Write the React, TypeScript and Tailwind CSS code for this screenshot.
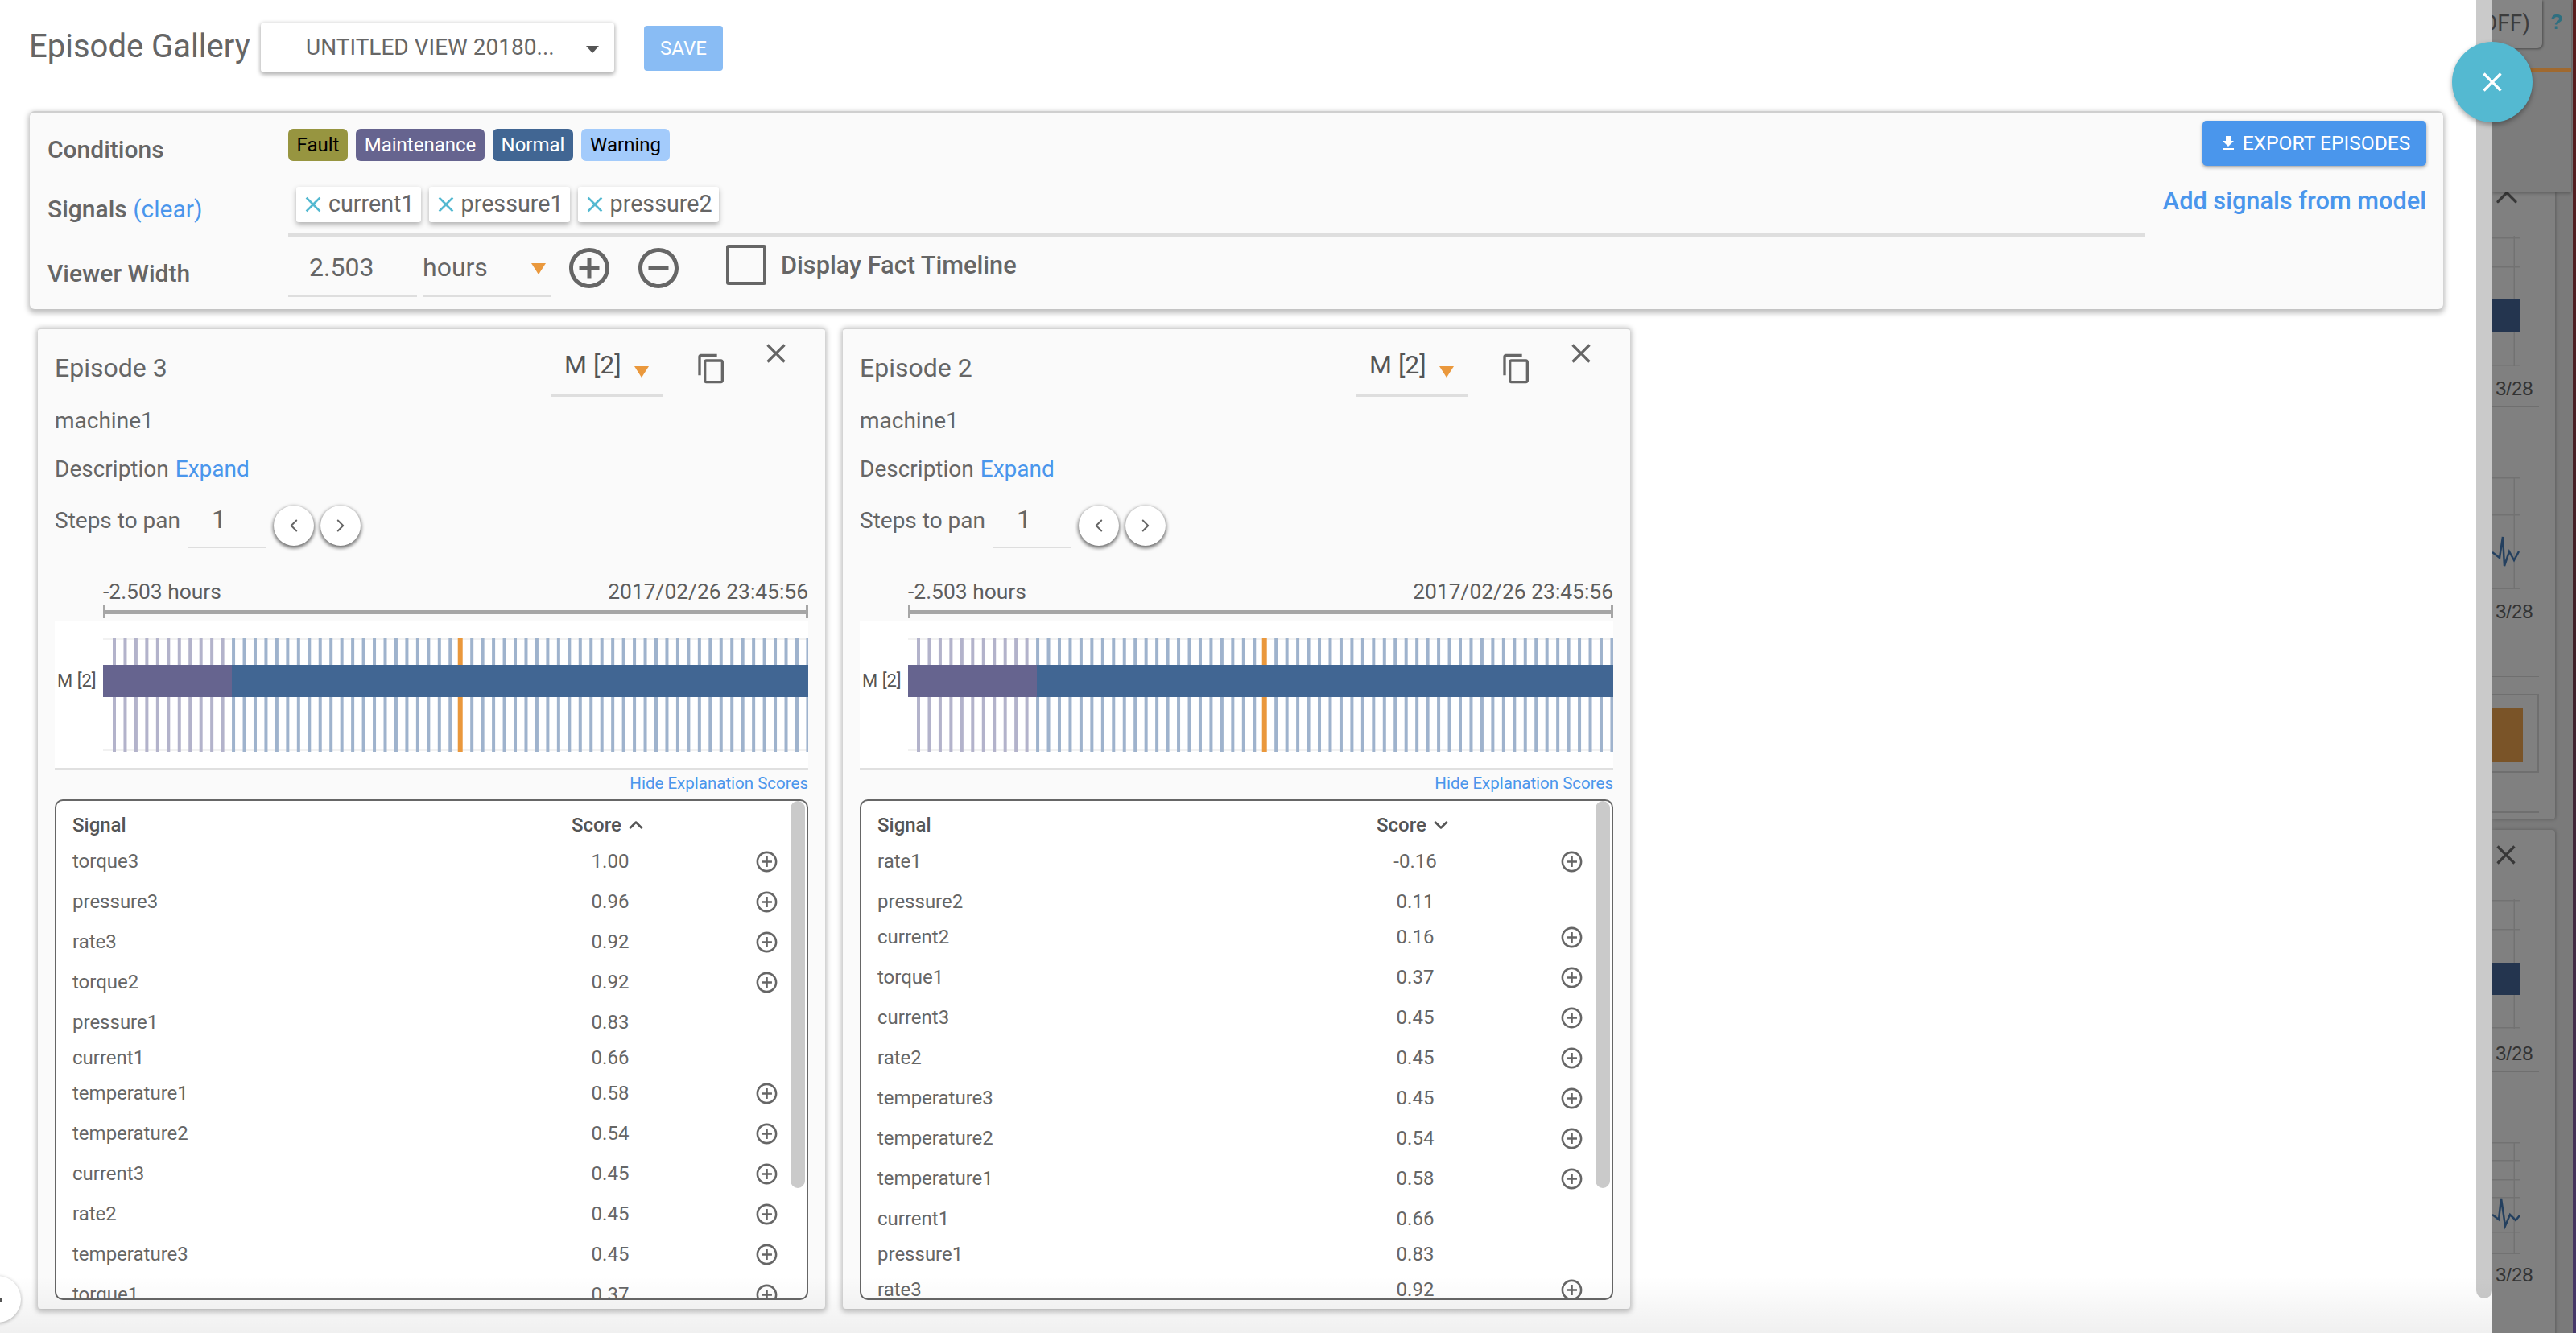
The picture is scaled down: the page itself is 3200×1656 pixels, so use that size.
import { ChevronDown, ChevronLeft, ChevronRight, ChevronUp } from 'lucide-react';

const ROBOTO = "font-['Roboto',sans-serif]";

const ICONS = {
  plus: 'M13 7h-2v4H7v2h4v4h2v-4h4v-2h-4V7zm-1-5C6.48 2 2 6.48 2 12s4.48 10 10 10 10-4.48 10-10S17.52 2 12 2zm0 18c-4.41 0-8-3.59-8-8s3.59-8 8-8 8 3.59 8 8-3.59 8-8 8z',
  minus: 'M7 11v2h10v-2H7zm5-9C6.48 2 2 6.48 2 12s4.48 10 10 10 10-4.48 10-10S17.52 2 12 2zm0 18c-4.41 0-8-3.59-8-8s3.59-8 8-8 8 3.59 8 8-3.59 8-8 8z',
  copy: 'M16 1H4c-1.1 0-2 .9-2 2v14h2V3h12V1zm3 4H8c-1.1 0-2 .9-2 2v14c0 1.1.9 2 2 2h11c1.1 0 2-.9 2-2V7c0-1.1-.9-2-2-2zm0 16H8V7h11v14z',
  download: 'M19 9h-4V3H9v6H5l7 7 7-7zM5 18v2h14v-2H5z',
  close: 'M19 6.41L17.59 5 12 10.59 6.41 5 5 6.41 10.59 12 5 17.59 6.41 19 12 13.41 17.59 19 19 17.59 13.41 12z',
};

function Icon({ d, className }: { d: string; className: string }) {
  return (
    <svg viewBox="0 0 24 24" fill="currentColor" className={`shrink-0 ${className}`}>
      <path d={d} />
    </svg>
  );
}

function Caret({ className }: { className: string }) {
  return <span className={`w-0 h-0 border-x-[9px] border-x-transparent border-t-[14px] ${className}`} />;
}

interface Row {
  name: string;
  score: string;
  plus: boolean;
}

const rowsA: Row[] = [
  { name: 'torque3', score: '1.00', plus: true },
  { name: 'pressure3', score: '0.96', plus: true },
  { name: 'rate3', score: '0.92', plus: true },
  { name: 'torque2', score: '0.92', plus: true },
  { name: 'pressure1', score: '0.83', plus: false },
  { name: 'current1', score: '0.66', plus: false },
  { name: 'temperature1', score: '0.58', plus: true },
  { name: 'temperature2', score: '0.54', plus: true },
  { name: 'current3', score: '0.45', plus: true },
  { name: 'rate2', score: '0.45', plus: true },
  { name: 'temperature3', score: '0.45', plus: true },
  { name: 'torque1', score: '0.37', plus: true },
];

const rowsB: Row[] = [
  { name: 'rate1', score: '-0.16', plus: true },
  { name: 'pressure2', score: '0.11', plus: false },
  { name: 'current2', score: '0.16', plus: true },
  { name: 'torque1', score: '0.37', plus: true },
  { name: 'current3', score: '0.45', plus: true },
  { name: 'rate2', score: '0.45', plus: true },
  { name: 'temperature3', score: '0.45', plus: true },
  { name: 'temperature2', score: '0.54', plus: true },
  { name: 'temperature1', score: '0.58', plus: true },
  { name: 'current1', score: '0.66', plus: false },
  { name: 'pressure1', score: '0.83', plus: false },
  { name: 'rate3', score: '0.92', plus: true },
];

// plot area of the timeline, x is relative to the start of the band
function Timeline({ start }: { start: number }) {
  const ticks = Array.from({ length: 65 }, (_, i) => start + i * 13.46);
  return (
    <svg width="876" height="182" className="block shrink-0">
      <rect x="0" y="20" width="876" height="3" fill="#f1f1f1" />
      <rect x="0" y="158" width="876" height="3" fill="#f1f1f1" />
      {ticks.map((x, i) => (
        <rect
          key={i}
          x={i === 32 ? x - 2 : x}
          y="20"
          width={i === 32 ? 6 : 4}
          height="142"
          fill={i === 32 ? '#ea983c' : i < 11 ? '#b3b3cb' : '#9fb3cd'}
        />
      ))}
      <rect x="0" y="54" width="160" height="40" fill="#66648f" />
      <rect x="160" y="54" width="716" height="40" fill="#416693" />
    </svg>
  );
}

function EpisodeCard({ title, rows, sortUp, tickStart }: { title: string; rows: Row[]; sortUp: boolean; tickStart: number }) {
  return (
    <div className="w-[978px] h-[1219px] bg-[#fafafa] rounded-[4px] border-t-2 border-[#d4d4d4] shadow-[0_2px_6px_2px_rgba(0,0,0,0.25)] px-[21px] text-[#666]">
      {/* title row */}
      <div className="flex items-start h-[88px]">
        <div className="mt-[28px] text-[32px] leading-[40px]">{title}</div>
        <div className="ml-auto mt-[18px] w-[140px] h-[66px] border-b-4 border-[#dedede] flex items-start pl-[17px] pt-[6px] text-[#555]">
          <span className="text-[32px] leading-[40px]">M [2]</span>
          <Caret className="ml-[16px] mt-[22px] border-t-[#ea983c]" />
        </div>
        <Icon d={ICONS.copy} className="w-[40px] h-[40px] ml-[40px] mt-[29px]" />
        <Icon d={ICONS.close} className="w-[40px] h-[40px] ml-[40px] mr-[20px] mt-[10px]" />
      </div>
      <div className="h-[50px] pt-[2px] flex items-center text-[28px]">machine1</div>
      <div className="mt-[16px] h-[40px] flex items-center text-[28px]">
        Description<span className="ml-[8px] text-[#4a96ec]">Expand</span>
      </div>
      {/* pan controls */}
      <div className="mt-[17px] h-[64px] flex items-start">
        <span className="text-[28px] leading-[40px] mt-[7px]">Steps to pan</span>
        <div className="ml-[10px] w-[97px] h-[61px] border-b-2 border-[#dedede] pl-[29px] text-[32px] leading-[40px] pt-[5px]">1</div>
        <button className="ml-[9px] mt-[8px] w-[50px] h-[50px] rounded-full bg-white flex items-center justify-center shadow-[0_2px_4px_1px_rgba(0,0,0,0.55)]">
          <ChevronLeft size={26} strokeWidth={1.8} />
        </button>
        <button className="ml-[8px] mt-[8px] w-[50px] h-[50px] rounded-full bg-white flex items-center justify-center shadow-[0_2px_4px_1px_rgba(0,0,0,0.55)]">
          <ChevronRight size={26} strokeWidth={1.8} />
        </button>
      </div>
      <div className="mt-[36px] ml-[60px] h-[32px] flex justify-between items-center text-[26.4px] text-[#5e5e5e]">
        <span>-2.503 hours</span>
        <span>2017/02/26 23:45:56</span>
      </div>
      <div className="ml-[60px] h-[16px] border-x-[3px] border-[#a6a6a6] flex items-center">
        <div className="w-full h-[5px] bg-[#a6a6a6]" />
      </div>
      {/* timeline */}
      <div className="mt-[4px] h-[184px] bg-white border-b-2 border-[#e0e0e0] flex">
        <div className="w-[60px] pl-[3px] h-[146px] flex items-center text-[22px] text-[#555]">M [2]</div>
        <Timeline start={tickStart} />
      </div>
      <div className="h-[34px] flex items-center justify-end text-[20.5px] text-[#4a96ec]">Hide Explanation Scores</div>
      {/* score table */}
      <div className="relative mt-[3px] h-[622px] bg-white border-2 border-[#666] rounded-[10px] overflow-hidden text-[24px]">
        <div className="absolute right-[2px] top-0 w-[18px] h-[481px] bg-[#cacaca] rounded-[9px]" />
        <div className="h-[49px] pt-[10px] flex items-center font-medium text-[#555]">
          <span className="pl-[20px] w-[640px]">Signal</span>
          <span>Score</span>
          {sortUp ? (
            <ChevronUp size={28} strokeWidth={2.2} className="ml-[4px]" />
          ) : (
            <ChevronDown size={28} strokeWidth={2.2} className="ml-[4px]" />
          )}
        </div>
        {rows.map((r) => (
          <div key={r.name} className={r.plus ? 'h-[50px] flex items-start leading-[52px]' : 'h-[44px] flex items-start leading-[52px]'}>
            <span className="pl-[20px] w-[640px]">{r.name}</span>
            <span className="w-[96px] text-center">{r.score}</span>
            {r.plus && <Icon d={ICONS.plus} className="ml-[131px] mt-[11px] w-[31px] h-[31px]" />}
          </div>
        ))}
      </div>
    </div>
  );
}

function SideChart({ lines, h, bar, spark }: { lines: number[]; h: number; bar?: number; spark?: string }) {
  return (
    <svg width="34" height={h} className="block">
      {lines.map((y) => (
        <rect key={y} x="0" y={y} width="34" height="1.5" fill="#727272" />
      ))}
      <rect x="26.5" y="0" width="1.5" height={h} fill="#727272" />
      {bar !== undefined && <rect x="0" y={bar} width="34" height="40" fill="#24354f" />}
      {spark && <polyline points={spark} fill="none" stroke="#24405f" strokeWidth="2.5" />}
    </svg>
  );
}

// what is left visible of the dimmed page behind the drawer
function DimmedPage() {
  return (
    <div className="w-[100px] h-full bg-[#7a7a7a] font-['Liberation_Sans',sans-serif] text-[24px] text-[#333] overflow-hidden">
      <div className="h-[238px] w-[98px] bg-[#7c7c7c] shadow-[0_2px_4px_rgba(0,0,0,0.3)] relative z-10">
        <div className="flex items-start">
          <div className="w-[62px] h-[60px] bg-[#858585] rounded-br-[6px] shadow-[1px_1px_3px_rgba(0,0,0,0.4)] flex items-center pb-[2px] overflow-hidden">
            <span className="text-[28px] -ml-[13px] text-[#3c3c3c] whitespace-nowrap font-['Roboto',sans-serif]">OFF)</span>
          </div>
          <span className="ml-[10px] mt-[8px] text-[26px] font-bold text-[#2f6f80]">?</span>
        </div>
        <div className="mt-[25px] h-[5px] bg-[#a0692f]" />
      </div>
      <div className="flow-root w-[78px] h-[780px] bg-[#808080] rounded-br-[4px] shadow-[1px_0_4px_rgba(0,0,0,0.25)]">
        <ChevronUp size={44} strokeWidth={1.8} className="-ml-[4px] -mt-[15px] text-[#383838]" />
        <div className="mt-[26px]">
          <SideChart lines={[2, 38, 160]} h={162} bar={79} />
        </div>
        <div className="mt-[14px] pl-[4px] leading-[28px]">3/28</div>
        <div className="mt-[7px] h-[1.5px] w-[58px] bg-[#6f6f6f]" />
        <div className="mt-[87px]">
          <SideChart lines={[0, 46, 138]} h={139} spark="0,93 9,100 13,74 15,110 21,92 27,103 33,92" />
        </div>
        <div className="mt-[14px] pl-[4px] leading-[28px]">3/28</div>
        <div className="mt-[66px] h-[1.5px] w-[58px] bg-[#6f6f6f]" />
        <div className="mt-[21px] w-[58px] h-[98px] border-2 border-l-0 border-[#6f6f6f] pt-[15px]">
          <div className="w-[38px] h-[68px] bg-[#7a5428]" />
        </div>
        <div className="mt-[48px] h-[1.5px] w-[58px] bg-[#6f6f6f]" />
      </div>
      <div className="mt-[13px] pt-[11px] w-[78px] h-[640px] bg-[#808080] rounded-tr-[4px] shadow-[1px_0_4px_rgba(0,0,0,0.25)]">
        <Icon d={ICONS.close} className="w-[40px] h-[40px] -ml-[3px] text-[#383838]" />
        <div className="mt-[35px]">
          <SideChart lines={[1, 37, 159]} h={161} bar={79} />
        </div>
        <div className="mt-[17px] pl-[4px] leading-[28px]">3/28</div>
        <div className="mt-[7px] h-[1.5px] w-[58px] bg-[#6f6f6f]" />
        <div className="mt-[87px]">
          <SideChart lines={[0, 22, 46, 68, 111, 138]} h={139} spark="0,90 8,96 11,70 16,104 22,90 29,97 34,91" />
        </div>
        <div className="mt-[12px] pl-[4px] leading-[28px]">3/28</div>
      </div>
    </div>
  );
}

export default function App() {
  return (
    <div className={`relative w-[3200px] h-[1656px] overflow-hidden flex bg-white ${ROBOTO}`}>
      <div className="w-[3076px] h-full">
        {/* header */}
        <div className="h-[138px] flex items-start text-[#666]">
          <div className="ml-[36px] mt-[36px] text-[40px] leading-[44px] w-[288px] whitespace-nowrap">Episode Gallery</div>
          <div className="mt-[28px] w-[439px] h-[62px] bg-white rounded-[4px] shadow-[0_2px_5px_1px_rgba(0,0,0,0.3)] flex items-center pl-[56px] text-[28px]">
            <span>UNTITLED VIEW 20180...</span>
            <span className="ml-[39px] w-0 h-0 border-x-[8px] border-x-transparent border-t-[9px] border-t-[#555] mt-[4px]" />
          </div>
          <button className="ml-[37px] mt-[32px] w-[98px] h-[56px] bg-[#89bcf4] rounded-[4px] text-white text-[24px]">SAVE</button>
        </div>

        {/* filters panel */}
        <div className="ml-[37px] w-[2998px] h-[246px] bg-[#fafafa] rounded-[6px] border-t-2 border-[#cfcfcf] shadow-[0_3px_6px_2px_rgba(0,0,0,0.25)] text-[#666]">
          <div className="h-[72px] flex items-start">
            <div className="ml-[22px] w-[299px] mt-[28px] text-[30px] leading-[36px] font-medium">Conditions</div>
            <div className="mt-[20px] flex gap-[10px] text-[24px]">
              <span className="w-[74px] h-[40px] flex items-center justify-center rounded-[6px] bg-[#979540] text-black">Fault</span>
              <span className="w-[160px] h-[40px] flex items-center justify-center rounded-[6px] bg-[#66648f] text-white">Maintenance</span>
              <span className="w-[100px] h-[40px] flex items-center justify-center rounded-[6px] bg-[#416693] text-white">Normal</span>
              <span className="w-[110px] h-[40px] flex items-center justify-center rounded-[6px] bg-[#a3cbfb] text-black">Warning</span>
            </div>
            <button className="ml-auto mr-[21px] mt-[10px] w-[278px] h-[56px] bg-[#4a96ec] rounded-[5px] text-white text-[24.6px] flex items-center justify-center gap-[6px] shadow-[0_2px_4px_rgba(0,0,0,0.35)]">
              <Icon d={ICONS.download} className="w-[24px] h-[24px]" />
              EXPORT EPISODES
            </button>
          </div>
          <div className="h-[84px] flex items-start">
            <div className="ml-[22px] w-[299px] mt-[30px] text-[30px] leading-[36px] font-medium whitespace-nowrap">
              Signals <span className="font-normal text-[#4a96ec]">(clear)</span>
            </div>
            <div className="w-[2306px] h-[82px] border-b-4 border-[#dedede] pl-[10px] pt-[20px] flex gap-[10px] items-start text-[28.7px]">
              {['current1', 'pressure1', 'pressure2'].map((s) => (
                <span key={s} className="h-[44px] pl-[5px] pr-[8px] flex items-center bg-white rounded-[3px] shadow-[0_3px_6px_rgba(0,0,0,0.3)]">
                  <Icon d={ICONS.close} className="w-[32px] h-[32px] mr-[3px] text-[#54b9d1]" />
                  {s}
                </span>
              ))}
            </div>
            <div className="ml-auto mr-[21px] mt-[20px] text-[30.7px] leading-[36px] font-medium text-[#4a96ec] whitespace-nowrap">Add signals from model</div>
          </div>
          <div className="h-[88px] flex items-start">
            <div className="ml-[22px] w-[299px] mt-[26px] text-[30px] leading-[36px] font-medium">Viewer Width</div>
            <div className="mt-[8px] w-[160px] h-[65px] border-b-[3px] border-[#dedede] pl-[26px] pt-[8px] text-[32px] leading-[40px]">2.503</div>
            <div className="mt-[8px] ml-[7px] w-[159px] h-[65px] border-b-[3px] border-[#dedede] flex items-start pt-[8px] text-[32px] leading-[40px]">
              hours
              <Caret className="ml-[54px] mt-[15px] border-t-[#ea983c]" />
            </div>
            <Icon d={ICONS.plus} className="ml-[18px] mt-[7px] w-[60px] h-[60px]" />
            <Icon d={ICONS.minus} className="ml-[26px] mt-[7px] w-[60px] h-[60px]" />
            <div className="ml-[54px] mt-[8px] w-[50px] h-[50px] border-4 border-[#666] rounded-[3px] shrink-0" />
            <div className="ml-[18px] mt-[16px] text-[30.7px] leading-[36px] font-medium whitespace-nowrap">Display Fact Timeline</div>
          </div>
        </div>

        {/* episode cards */}
        <div className="mt-[23px] ml-[47px] flex gap-[22px]">
          <EpisodeCard title="Episode 3" rows={rowsA} sortUp tickStart={12} />
          <EpisodeCard title="Episode 2" rows={rowsB} sortUp={false} tickStart={11} />
        </div>
      </div>

      {/* page scrollbar */}
      <div className="w-[20px] h-full">
        <div className="h-[1613px] bg-[#cacaca] rounded-b-[10px]" />
      </div>

      <DimmedPage />
      <div className="w-[4px] h-full bg-linear-to-b from-[#5a1c1c] via-[#3e2028] to-[#46386a]" />

      {/* fade over the bottom edge of the drawer */}
      <div className="absolute left-0 bottom-0 w-[3096px] h-[70px] bg-linear-to-b from-transparent to-black/6 pointer-events-none z-10" />

      {/* close drawer button */}
      <button className="absolute z-20 left-[3046px] top-[52px] w-[100px] h-[100px] rounded-full bg-[#54b9d1] shadow-[0_3px_6px_rgba(0,0,0,0.35)] flex items-center justify-center text-white">
        <Icon d={ICONS.close} className="w-[40px] h-[40px]" />
      </button>

      {/* open sidebar handle */}
      <div className="absolute z-20 -left-[34px] top-[1585px] w-[60px] h-[58px] rounded-full bg-white shadow-[0_1px_4px_rgba(0,0,0,0.3)]">
        <span className="absolute left-[34px] top-[27px] w-[2px] h-[6px] bg-[#555]" />
      </div>
    </div>
  );
}
